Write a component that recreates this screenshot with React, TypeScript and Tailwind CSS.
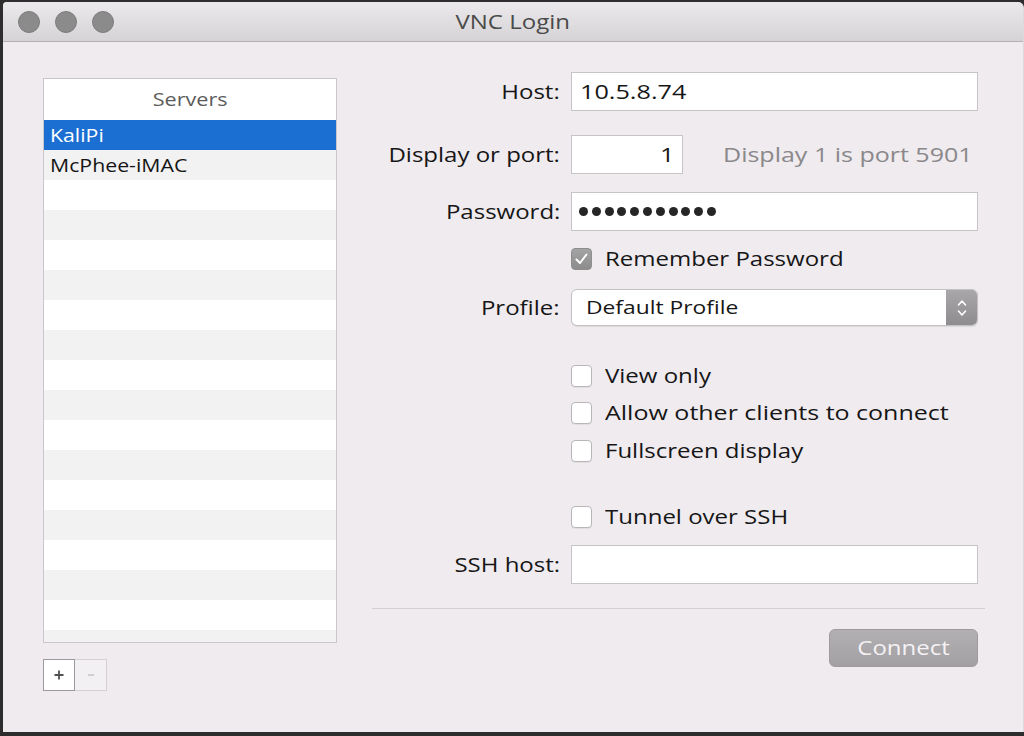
import React from "react";

const T = ({ children, o = "l", s = "n" }: { children: React.ReactNode; o?: "l" | "r" | "c"; s?: "n" | "d" | "s" | "w" }) => {
  const origin = o === "l" ? "origin-left" : o === "r" ? "origin-right" : "origin-center";
  const scale = s === "n" ? "scale-x-[1.2]" : s === "d" ? "scale-x-[1.26]" : s === "w" ? "scale-x-[1.25]" : "scale-x-[1.12]";
  return <span className={`inline-block whitespace-nowrap ${origin} ${scale}`}>{children}</span>;
};

const Checkbox = ({ checked = false }: { checked?: boolean }) =>
  checked ? (
    <div className="w-[21px] h-[22px] rounded-[4px] border border-[#8e8e8e] bg-gradient-to-b from-[#a4a4a4] to-[#8c8c8c] flex items-center justify-center">
      <svg width="15" height="14" viewBox="0 0 15 14">
        <path d="M2.5 7.5 L6 11 L12.5 2.5" fill="none" stroke="#ffffff" strokeWidth="2" strokeLinecap="round" strokeLinejoin="round" />
      </svg>
    </div>
  ) : (
    <div className="w-[21px] h-[22px] rounded-[4px] border border-[#b9b6b9] bg-white shadow-[0_1px_0_rgba(0,0,0,0.05)]" />
  );

const Label = ({ children }: { children: React.ReactNode }) => (
  <div className="w-[189px] text-right pr-[1px] text-[20px] text-[#161616]">
    <T o="r">{children}</T>
  </div>
);

const CheckRow = ({ mt, label, checked }: { mt: string; label: string; checked?: boolean }) => (
  <div className={`flex items-center h-[24px] ${mt}`}>
    <div className="w-[199px]" />
    <Checkbox checked={checked} />
    <div className="ml-[13px] text-[20px] text-[#161616] leading-none">
      <T s={label.length > 25 ? "w" : "n"}>{label}</T>
    </div>
  </div>
);

export default function App() {
  const rows = Array.from({ length: 18 });
  return (
    <div className="w-[1024px] h-[736px] bg-[#2d2d2d] pt-[2px] pl-[3px] pb-[4px] font-['Open_Sans','Liberation_Sans',sans-serif] overflow-hidden">
      <div className="w-[1021px] h-[730px] bg-[#efebef] rounded-tr-[6px] rounded-tl-[4px] flex flex-col overflow-hidden border-r border-[#dcdadc]">
        {/* Title bar */}
        <div className="h-[40px] border-b border-[#b3b1b3] bg-gradient-to-b from-[#ebe9eb] to-[#d5d3d5] flex items-center relative">
          <div className="flex gap-[15px] pl-[15px] pt-[1px]">
            <div className="w-[22px] h-[22px] rounded-full bg-[#8b8b8b] border border-[#7c7c7c]" />
            <div className="w-[22px] h-[22px] rounded-full bg-[#8b8b8b] border border-[#7c7c7c]" />
            <div className="w-[22px] h-[22px] rounded-full bg-[#8b8b8b] border border-[#7c7c7c]" />
          </div>
          <div className="absolute inset-0 flex items-center justify-center text-[20px] text-[#4a4a4a]">
            <T o="c">VNC Login</T>
          </div>
        </div>

        {/* Body */}
        <div className="flex flex-1">
          {/* Left column */}
          <div className="pl-[40px] pt-[36px] flex flex-col">
            <div className="w-[294px] h-[565px] border border-[#c9c7c9] bg-white flex flex-col overflow-hidden">
              <div className="h-[41px] shrink-0 flex items-center justify-center text-[18px] text-[#5b5b5b]">
                <T o="c">Servers</T>
              </div>
              {rows.map((_, i) => {
                if (i === 0)
                  return (
                    <div key={i} className="h-[30px] shrink-0 bg-[#1b6fd2] text-white text-[19px] flex items-center pl-[6px]">
                      <T s="s">KaliPi</T>
                    </div>
                  );
                return (
                  <div
                    key={i}
                    className={`h-[30px] shrink-0 flex items-center pl-[6px] text-[19px] text-[#161616] ${i % 2 === 1 ? "bg-[#f3f2f3]" : "bg-white"}`}
                  >
                    {i === 1 ? <T s="s">McPhee-iMAC</T> : null}
                  </div>
                );
              })}
            </div>
            <div className="mt-[16px] flex">
              <div className="w-[32px] h-[32px] border border-[#9c9a9c] bg-white flex items-center justify-center">
                <svg width="12" height="12" viewBox="0 0 12 12">
                  <path d="M6 1.5 V10.5 M1.5 6 H10.5" stroke="#505050" strokeWidth="1.8" />
                </svg>
              </div>
              <div className="w-[32px] h-[32px] border border-l-0 border-[#d3d1d3] bg-[#f2f0f2] flex items-center justify-center">
                <svg width="10" height="4" viewBox="0 0 10 4">
                  <path d="M2 2 H8" stroke="#c2c0c2" strokeWidth="1.4" />
                </svg>
              </div>
            </div>
          </div>

          {/* Right column */}
          <div className="ml-[35px] w-[613px] flex flex-col">
            {/* Host */}
            <div className="flex items-center h-[39px] mt-[30px]">
              <Label>Host:</Label>
              <div className="ml-[10px] w-[407px] h-[39px] border border-[#c6c4c6] bg-white flex items-center pl-[8px] text-[20px] text-[#161616]">
                <T s="d">10.5.8.74</T>
              </div>
            </div>
            {/* Display */}
            <div className="flex items-center h-[39px] mt-[24px]">
              <Label>Display or port:</Label>
              <div className="ml-[10px] w-[112px] h-[39px] border border-[#c6c4c6] bg-white flex items-center justify-end pr-[8px] text-[20px] text-[#161616]">
                <T o="r" s="d">1</T>
              </div>
              <div className="ml-[40px] text-[20px] text-[#8a888a]">
                <T s="w">Display 1 is port 5901</T>
              </div>
            </div>
            {/* Password */}
            <div className="flex items-center h-[39px] mt-[18px]">
              <Label>Password:</Label>
              <div className="ml-[10px] w-[407px] h-[39px] border border-[#c6c4c6] bg-white flex items-center pl-[7px] gap-[3.8px]">
                {Array.from({ length: 11 }).map((_, i) => (
                  <div key={i} className="w-[9px] h-[9px] rounded-full bg-[#262626]" />
                ))}
              </div>
            </div>
            <CheckRow mt="mt-[16px]" label="Remember Password" checked />
            {/* Profile */}
            <div className="flex items-center h-[37px] mt-[18px]">
              <Label>Profile:</Label>
              <div className="ml-[10px] w-[407px] h-[37px] rounded-[6px] border border-[#c3c1c3] bg-white flex shadow-[0_1px_1px_rgba(0,0,0,0.08)] overflow-hidden">
                <div className="flex-1 flex items-center pl-[14px] text-[19px] text-[#161616]">
                  <T>Default Profile</T>
                </div>
                <div className="w-[31px] bg-gradient-to-b from-[#a9a7a9] to-[#8e8c8e] flex items-center justify-center">
                  <svg width="12" height="22" viewBox="0 0 12 22">
                    <path d="M2.5 8 L6 4 L9.5 8 M2.5 14 L6 18 L9.5 14" fill="none" stroke="#ffffff" strokeWidth="1.6" strokeLinecap="round" strokeLinejoin="round" />
                  </svg>
                </div>
              </div>
            </div>
            <CheckRow mt="mt-[38px]" label="View only" />
            <CheckRow mt="mt-[13px]" label="Allow other clients to connect" />
            <CheckRow mt="mt-[14px]" label="Fullscreen display" />
            <CheckRow mt="mt-[42px]" label="Tunnel over SSH" />
            {/* SSH host */}
            <div className="flex items-center h-[39px] mt-[16px]">
              <Label>SSH host:</Label>
              <div className="ml-[10px] w-[407px] h-[39px] border border-[#c6c4c6] bg-white" />
            </div>
            <div className="mt-[24px] h-px bg-[#d2cfd2] w-[613px]" />
            <div className="mt-[20px] flex justify-end pr-[7px]">
              <div className="w-[149px] h-[38px] rounded-[6px] border border-[#9d9b9d] bg-gradient-to-b from-[#b2b0b2] to-[#a2a0a2] flex items-center justify-center text-[20px] text-[#f4f2f4]">
                <T o="c">Connect</T>
              </div>
            </div>
          </div>
        </div>
      </div>
    </div>
  );
}
